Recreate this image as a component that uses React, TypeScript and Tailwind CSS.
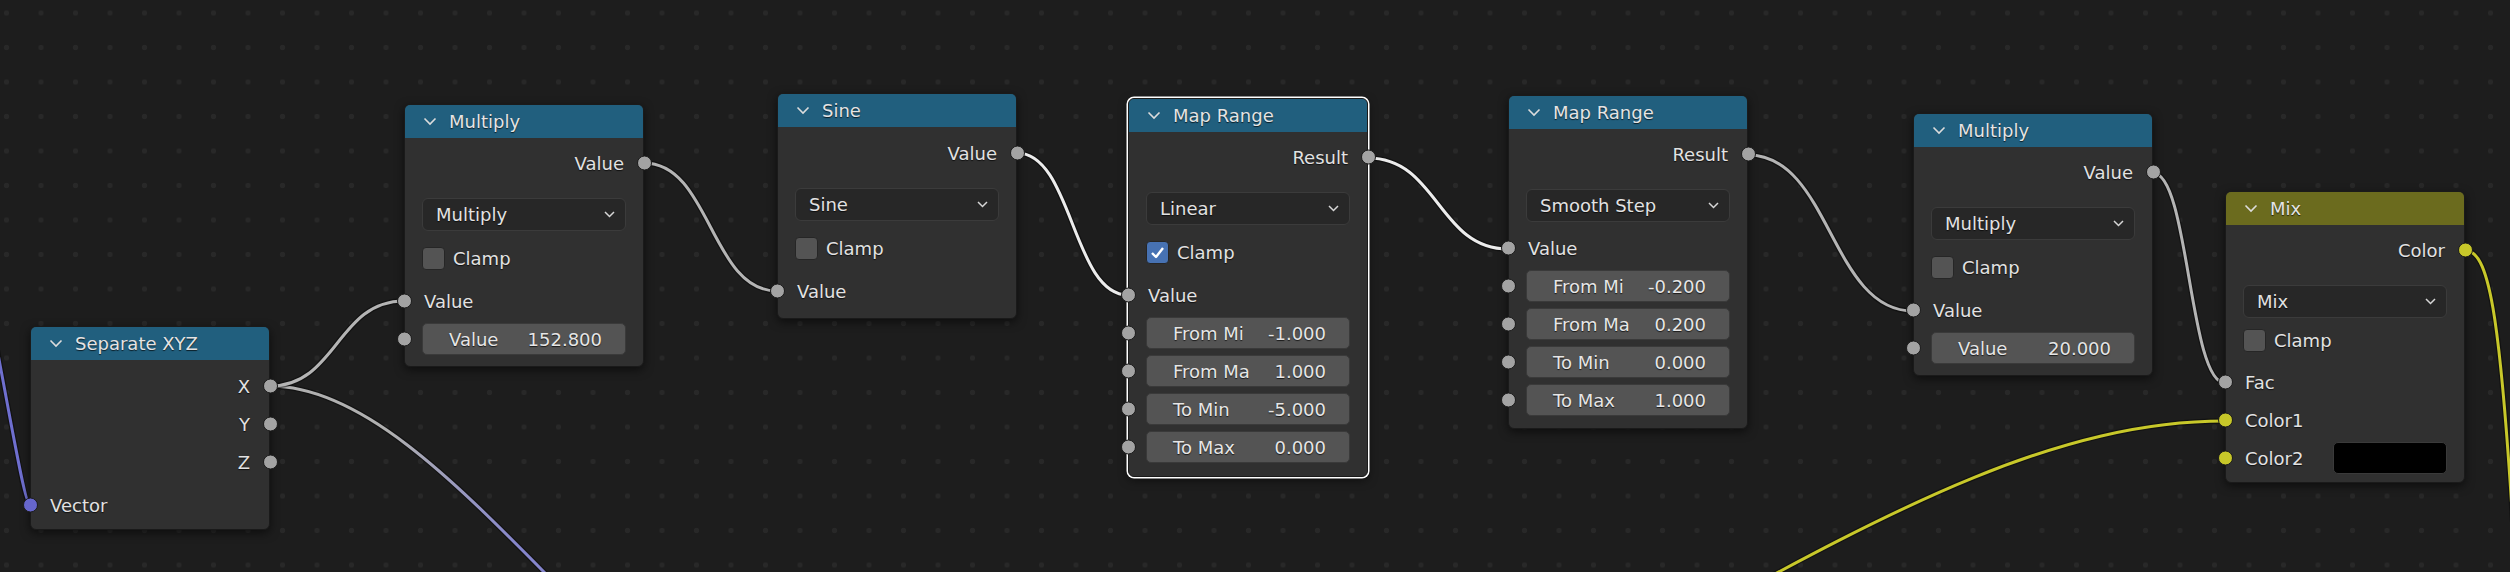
import type { ReactNode } from 'react'

const GRAY = '#a3a3a3'
const PURPLE = '#6666cc'
const YELLOW = '#c7c729'

const link = (x1: number, y1: number, x2: number, y2: number) => {
  const h = Math.abs(x2 - x1) * 0.5
  return `M${x1} ${y1} C${x1 + h} ${y1} ${x2 - h} ${y2} ${x2} ${y2}`
}

function Socket({ side, color = GRAY }: { side: 'left' | 'right'; color?: string }) {
  return (
    <span
      className={`absolute top-1/2 -translate-y-1/2 w-[15px] h-[15px] rounded-full border border-[#1b1b1b] ${
        side === 'left' ? 'left-[-8.5px]' : 'right-[-8.5px]'
      }`}
      style={{ backgroundColor: color }}
    />
  )
}

function Node({
  left,
  top,
  title,
  header = 'bg-[#215f7e]',
  selected = false,
  children,
}: {
  left: number
  top: number
  title: string
  header?: string
  selected?: boolean
  children: ReactNode
}) {
  return (
    <div
      className={`absolute w-[240px] rounded-[6px] bg-[#303030] border border-[#1a1a1a] shadow-[0_3px_10px_rgba(0,0,0,0.55)] ${
        selected ? 'ring-[1.5px] ring-white' : ''
      }`}
      style={{ left, top }}
    >
      <div className={`h-[33px] flex items-center pl-[18px] gap-[12px] rounded-t-[5px] ${header}`}>
        <svg width="14" height="9" viewBox="0 0 14 9" className="shrink-0">
          <polyline points="1.5,1.5 7,7 12.5,1.5" fill="none" stroke="#dcdcdc" strokeWidth="1.6" />
        </svg>
        <span className="text-[18px] text-[#e4e4e4] leading-none [text-shadow:0_1px_1px_rgba(0,0,0,0.7)]">
          {title}
        </span>
      </div>
      {children}
    </div>
  )
}

function OutRow({ label, color }: { label: string; color?: string }) {
  return (
    <div className="relative h-[38px] flex items-center justify-end pr-[19px]">
      <span className="text-[18px] text-[#e2e2e2] [text-shadow:0_1px_1px_rgba(0,0,0,0.7)]">{label}</span>
      <Socket side="right" color={color} />
    </div>
  )
}

function InRow({ label, color, className = '', children }: { label: string; color?: string; className?: string; children?: ReactNode }) {
  return (
    <div className={`relative h-[38px] flex items-center pl-[19px] pr-[17px] ${className}`}>
      <span className="text-[18px] text-[#e2e2e2] [text-shadow:0_1px_1px_rgba(0,0,0,0.7)]">{label}</span>
      {children}
      <Socket side="left" color={color} />
    </div>
  )
}

function Dropdown({ label }: { label: string }) {
  return (
    <div className="mx-[17px] mt-[16px] h-[33px] rounded-[6px] bg-[#272727] border border-[#3b3b3b] flex items-center justify-between pl-[13px] pr-[10px]">
      <span className="text-[18px] text-[#e2e2e2] [text-shadow:0_1px_1px_rgba(0,0,0,0.7)]">{label}</span>
      <svg width="11" height="7" viewBox="0 0 11 7">
        <polyline points="1,1 5.5,5.5 10,1" fill="none" stroke="#d6d6d6" strokeWidth="1.5" />
      </svg>
    </div>
  )
}

function Clamp({ checked = false, className = 'mt-[16px]' }: { checked?: boolean; className?: string }) {
  return (
    <div className={`mx-[17px] h-[23px] flex items-center gap-[8px] ${className}`}>
      <span
        className={`w-[23px] h-[23px] rounded-[4px] border border-[#262626] flex items-center justify-center ${
          checked ? 'bg-[#4772b3]' : 'bg-[#545454]'
        }`}
      >
        {checked && (
          <svg width="15" height="13" viewBox="0 0 15 13">
            <polyline points="2,7 6,11 13,2" fill="none" stroke="#ffffff" strokeWidth="2.4" strokeLinejoin="round" />
          </svg>
        )}
      </span>
      <span className="text-[18px] text-[#e2e2e2] [text-shadow:0_1px_1px_rgba(0,0,0,0.7)]">Clamp</span>
    </div>
  )
}

function Field({ label, value, className = 'mt-[6px]' }: { label: string; value: string; className?: string }) {
  return (
    <div className={`relative px-[17px] ${className}`}>
      <div className="h-[32px] rounded-[5px] bg-[#545454] border border-[#3a3a3a] flex items-center justify-between pl-[26px] pr-[23px]">
        <span className="text-[18px] text-[#e6e6e6] [text-shadow:0_1px_1px_rgba(0,0,0,0.7)]">{label}</span>
        <span className="text-[18px] text-[#e6e6e6] [text-shadow:0_1px_1px_rgba(0,0,0,0.7)]">{value}</span>
      </div>
      <Socket side="left" />
    </div>
  )
}

function Wires() {
  const wire = (d: string, color: string, key: string) => (
    <g key={key}>
      <path d={d} fill="none" stroke="rgba(10,10,10,0.55)" strokeWidth="5.5" strokeLinecap="round" />
      <path d={d} fill="none" stroke={color} strokeWidth="3" strokeLinecap="round" />
    </g>
  )
  return (
    <svg className="absolute inset-0 pointer-events-none" width="2510" height="572" viewBox="0 0 2510 572">
      <defs>
        <linearGradient id="xvec" gradientUnits="userSpaceOnUse" x1="390" y1="0" x2="520" y2="0">
          <stop offset="0" stopColor="#b0b0b0" />
          <stop offset="1" stopColor="#8585cc" />
        </linearGradient>
      </defs>
      {wire('M-90 60 C-40 60 18 505 30 505', '#6f6fcf', 'vec')}
      {wire('M270 386 C450 386 640 760 820 760', 'url(#xvec)', 'xdown')}
      {wire(link(270, 386, 404, 301), '#b4b4b4', 'w1')}
      {wire(link(644, 163, 777, 291), '#b4b4b4', 'w2')}
      {wire(link(1017, 153, 1128, 295), '#ececec', 'w3')}
      {wire(link(1368, 158, 1508, 249), '#ececec', 'w4')}
      {wire(link(1748, 155, 1913, 311), '#b4b4b4', 'w5')}
      {wire(link(2153, 173, 2225, 383), '#b4b4b4', 'w6')}
      {wire('M1690 620 C1900 505 2060 421 2225 421', '#c8c82a', 'y1')}
      {wire('M2465 250 C2488 252 2500 300 2515 560', '#c8c82a', 'y2')}
    </svg>
  )
}

export default function App() {
  return (
    <div
      className="relative w-[2510px] h-[572px] overflow-hidden bg-[#1d1d1d] bg-[radial-gradient(circle,#282828_2.4px,transparent_3px)] bg-[length:34.5px_34.5px] bg-[position:-10.75px_-4.25px]"
      style={{ fontFamily: '"DejaVu Sans", "Noto Sans", sans-serif' }}
    >
      <Wires />

      <Node left={30} top={326} title="Separate XYZ">
        <div className="pt-[7px] pb-[5px]">
          <OutRow label="X" />
          <OutRow label="Y" />
          <OutRow label="Z" />
          <InRow label="Vector" color={PURPLE} className="mt-[5px]" />
        </div>
      </Node>

      <Node left={404} top={104} title="Multiply">
        <div className="pt-[6px] pb-[11px]">
          <OutRow label="Value" />
          <Dropdown label="Multiply" />
          <Clamp />
          <InRow label="Value" className="mt-[12px]" />
          <Field label="Value" value="152.800" className="mt-[3px]" />
        </div>
      </Node>

      <Node left={777} top={93} title="Sine">
        <div className="pt-[7px] pb-[8px]">
          <OutRow label="Value" />
          <Dropdown label="Sine" />
          <Clamp />
          <InRow label="Value" className="mt-[12px]" />
        </div>
      </Node>

      <Node left={1128} top={98} title="Map Range" selected>
        <div className="pt-[6px] pb-[13px]">
          <OutRow label="Result" />
          <Dropdown label="Linear" />
          <Clamp checked />
          <InRow label="Value" className="mt-[12px]" />
          <Field label="From Mi" value="-1.000" className="mt-[3px]" />
          <Field label="From Ma" value="1.000" />
          <Field label="To Min" value="-5.000" />
          <Field label="To Max" value="0.000" />
        </div>
      </Node>

      <Node left={1508} top={95} title="Map Range">
        <div className="pt-[6px] pb-[12px]">
          <OutRow label="Result" />
          <Dropdown label="Smooth Step" />
          <InRow label="Value" className="mt-[7px]" />
          <Field label="From Mi" value="-0.200" className="mt-[3px]" />
          <Field label="From Ma" value="0.200" />
          <Field label="To Min" value="0.000" />
          <Field label="To Max" value="1.000" />
        </div>
      </Node>

      <Node left={1913} top={113} title="Multiply">
        <div className="pt-[6px] pb-[11px]">
          <OutRow label="Value" />
          <Dropdown label="Multiply" />
          <Clamp />
          <InRow label="Value" className="mt-[12px]" />
          <Field label="Value" value="20.000" className="mt-[3px]" />
        </div>
      </Node>

      <Node left={2225} top={191} title="Mix" header="bg-[#6b6b1e]">
        <div className="pt-[6px] pb-[5px]">
          <OutRow label="Color" color={YELLOW} />
          <Dropdown label="Mix" />
          <Clamp className="mt-[11px]" />
          <InRow label="Fac" className="mt-[11px]" />
          <InRow label="Color1" color={YELLOW} />
          <InRow label="Color2" color={YELLOW}>
            <span className="ml-auto w-[114px] h-[32px] rounded-[5px] bg-black border border-[#3a3a3a]" />
          </InRow>
        </div>
      </Node>
    </div>
  )
}
